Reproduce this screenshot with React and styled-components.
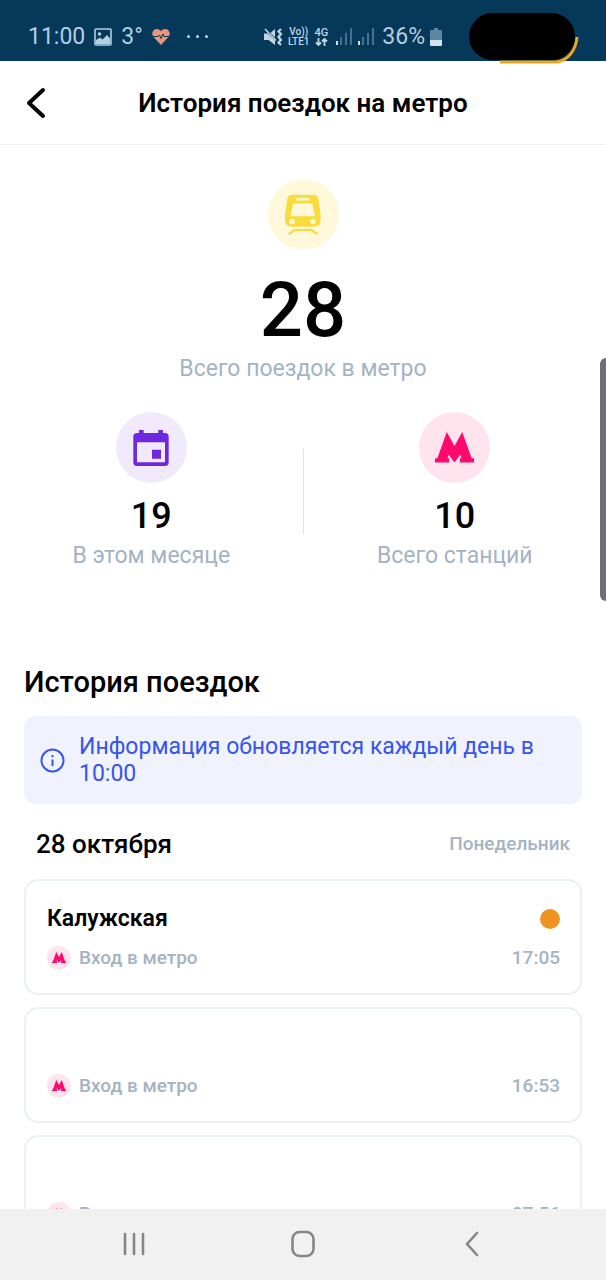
import React from 'react';
import styled, { createGlobalStyle } from 'styled-components';

const trips = [
  { id: 1, station: 'Калужская', action: 'Вход в метро', time: '17:05', line: '#ef9422' },
  { id: 2, station: '', action: 'Вход в метро', time: '16:53' },
  { id: 3, station: '', action: 'Вход в метро', time: '07:56' }
];

const MetroLogo = ({ width }) => (
  <svg width={width} viewBox="0 0 116 91" fill="#ff0a6c" aria-hidden="true">
    <path d="M35 0L58 42L81 0L109 78H116V91H74V78H79L75 68L58 91L41 68L37 78H42V91H0V78H7Z" />
  </svg>
);

const TrainIcon = () => (
  <svg width="36" height="41" viewBox="0 0 108 122" aria-hidden="true">
    <path
      fill="#fadb3c"
      d="M24 2H83Q98 2 100 14L107 63V76Q107 98 85 98H22Q0 98 0 76V63L7 14Q9 2 24 2Z"
    />
    <g fill="#fff8db">
      <rect x="33" y="11" width="40" height="8" rx="4" />
      <path d="M28 28H78Q81 28 82 31L90 63Q90 66 87 66H20Q17 66 17 63L24 31Q25 28 28 28Z" />
      <circle cx="21" cy="82" r="8" />
      <circle cx="84" cy="82" r="8" />
    </g>
    <path d="M11 120L28 108H80L98 120" fill="none" stroke="#fadb3c" strokeWidth="7" strokeLinejoin="round" />
  </svg>
);

const CalendarIcon = () => (
  <svg width="36" height="36" viewBox="0 0 108 108" fill="#6f27e0" aria-hidden="true">
    <path fillRule="evenodd" d="M12 9H96Q107 9 107 20V97Q107 108 96 108H12Q1 108 1 97V20Q1 9 12 9ZM12 37V97H96V37Z" />
    <path d="M18 0H32V12H18ZM76 0H90V12H76ZM57 59H84V86H57Z" />
  </svg>
);

const PictureIcon = () => (
  <svg width="18" height="18" viewBox="0 0 18 18" aria-hidden="true">
    <rect x="1" y="1" width="16" height="16" rx="1" fill="none" stroke="#b3cde3" strokeWidth="1.6" />
    <circle cx="5.500" cy="6" r="1.800" fill="#b3cde3" />
    <path d="M2 12L6 9.500L8.500 11.500L13 7L16 10.500V16H2Z" fill="#b3cde3" />
  </svg>
);

const HeartIcon = () => (
  <svg width="18" height="16" viewBox="0 0 18 16" aria-hidden="true">
    <path d="M9 2.200C11 -0.600 15 -0.500 16.700 1.700C18.500 4 17.600 6.800 16 8.500L9 16L2 8.500C0.400 6.800 -0.500 4 1.300 1.700C3 -0.500 7 -0.600 9 2.200Z" fill="#e8967a" />
    <path d="M1 7.500H6L7.500 6L9 9.500L11 5L12 7.500H17" fill="none" stroke="#06385a" strokeWidth="1" />
  </svg>
);

const MuteIcon = () => (
  <svg width="19" height="18" viewBox="0 0 19 18" aria-hidden="true">
    <path d="M0 5.500H3.500L11 12.500V17L4.500 12H0ZM6.500 5L11 1V9.200Z" fill="#c3d5e4" />
    <path d="M1 1L12 12.500" stroke="#c3d5e4" strokeWidth="1.600" />
    <path d="M17 1L14.500 3.500L17 6L14.500 9L17 12L14.500 14.500L17 17" fill="none" stroke="#c3d5e4" strokeWidth="2.200" />
  </svg>
);

const DataArrows = () => (
  <svg width="13" height="8" viewBox="0 0 13 8" aria-hidden="true">
    <path d="M3.500 0V7M1 4.500L3.500 7L6 4.500M9.500 8V1M7 3.500L9.500 1L12 3.500" fill="none" stroke="#c3d5e4" strokeWidth="1.800" />
  </svg>
);

const SignalIcon = () => (
  <svg width="16" height="17" viewBox="0 0 16 17" aria-hidden="true">
    <rect x="0" y="13" width="2" height="4" fill="#d5e3ee" />
    <g fill="#47708f">
      <rect x="4" y="9" width="2" height="8" />
      <rect x="9" y="5" width="2" height="12" />
      <rect x="14" y="0" width="2" height="17" />
    </g>
  </svg>
);

const BatteryIcon = () => (
  <svg width="12" height="18" viewBox="0 0 12 18" aria-hidden="true">
    <path d="M4 0H8V2H11Q12 2 12 3V12H0V3Q0 2 1 2H4Z" fill="#5d86a3" />
    <path d="M0 12H12V17Q12 18 11 18H1Q0 18 0 17Z" fill="#d5e3ee" />
  </svg>
);

const InfoIcon = () => (
  <svg width="25" height="25" viewBox="0 0 25 25" fill="none" stroke="#3654ee" strokeWidth="2" aria-hidden="true">
    <circle cx="12.500" cy="12.500" r="11" />
    <path d="M12.500 11.500V18M12.500 7V9.300" />
  </svg>
);

const Stat = ({ icon, tint, value, caption, large }) => (
  <StatBlock>
    <Circle $tint={tint}>{icon}</Circle>
    <StatValue $large={large}>{value}</StatValue>
    <Caption>{caption}</Caption>
  </StatBlock>
);

const Trip = ({ station, action, time, line }) => (
  <Card>
    <CardRow>
      <Station>{station}</Station>
      {line && <LineDot $color={line} />}
    </CardRow>
    <CardRow>
      <Action>
        <SmallCircle><MetroLogo width={14} /></SmallCircle>
        {action}
      </Action>
      <Time>{time}</Time>
    </CardRow>
  </Card>
);

const App = () => (
  <Screen>
    <GlobalStyle />
    <StatusBar>
      <StatusLeft>
        <span>11:00</span>
        <PictureIcon />
        <span>3°</span>
        <HeartIcon />
        <Dots><i /><i /><i /></Dots>
      </StatusLeft>
      <StatusRight>
        <MuteIcon />
        <Tiny><span>Vo))</span><span>LTE1</span></Tiny>
        <Tiny $big><span>4G</span><DataArrows /></Tiny>
        <Signals><SignalIcon /><SignalIcon /></Signals>
        <Percent>36%</Percent>
        <BatteryIcon />
      </StatusRight>
      <Cutout>
        <Arc width="80" height="28" viewBox="0 0 80 28">
          <path d="M1 26H57C69 25 77 14 78 1" fill="none" stroke="#efa51c" strokeWidth="3" />
        </Arc>
      </Cutout>
    </StatusBar>
    <Header>
      <BackButton type="button" aria-label="Назад">
        <svg width="20" height="32" viewBox="0 0 20 32" fill="none" stroke="#000" strokeWidth="4" strokeLinecap="round" strokeLinejoin="round">
          <path d="M17 3L3 16L17 29" />
        </svg>
      </BackButton>
      <Title>История поездок на метро</Title>
    </Header>
    <Content>
      <Stat large icon={<TrainIcon />} tint="#fff8db" value="28" caption="Всего поездок в метро" />
      <StatsRow>
        <Stat icon={<CalendarIcon />} tint="#f1eafc" value="19" caption="В этом месяце" />
        <Divider />
        <Stat icon={<MetroLogo width={39} />} tint="#ffe4ee" value="10" caption="Всего станций" />
      </StatsRow>
      <History>
        <SectionTitle>История поездок</SectionTitle>
        <Notice>
          <InfoIcon />
          <p>Информация обновляется каждый день в 10:00</p>
        </Notice>
        <DayRow>
          <Day>28 октября</Day>
          <Weekday>Понедельник</Weekday>
        </DayRow>
        <Trips>
          {trips.map(trip => <Trip key={trip.id} {...trip} />)}
        </Trips>
      </History>
    </Content>
    <NavBar>
      <NavButton type="button" aria-label="Недавние">
        <svg width="22" height="24" viewBox="0 0 22 24" stroke="#868686" strokeWidth="2.600" strokeLinecap="round">
          <path d="M2 2V22M11 2V22M20 2V22" />
        </svg>
      </NavButton>
      <NavButton type="button" aria-label="Домой">
        <svg width="24" height="28" viewBox="0 0 24 28" fill="none" stroke="#868686" strokeWidth="2.600">
          <rect x="1.500" y="2" width="21" height="24" rx="7" />
        </svg>
      </NavButton>
      <NavButton type="button" aria-label="Назад">
        <svg width="14" height="26" viewBox="0 0 14 26" fill="none" stroke="#868686" strokeWidth="2.600" strokeLinecap="round">
          <path d="M12 2L2 13L12 24" />
        </svg>
      </NavButton>
    </NavBar>
    <EdgeHandle />
  </Screen>
);

export default App;


const GlobalStyle = createGlobalStyle`
  * {
    box-sizing: border-box;
  }
  body, p, h1, h2, h3, ul {
    margin: 0;
    padding: 0;
  }
  body {
    background: #fff;
    color: #000;
    font-family: Roboto, "Noto Sans", sans-serif;
  }
  svg {
    display: block;
    flex-shrink: 0;
  }
  button {
    border: 0;
    padding: 0;
    background: none;
  }
`

const Screen = styled.div`
  position: relative;
  display: flex;
  flex-direction: column;
  height: 100vh;
  overflow: hidden;
`

const StatusBar = styled.div`
  display: flex;
  align-items: center;
  height: 61px;
  flex-shrink: 0;
  padding: 12px 31px 0 28px;
  background: #06385a;
  color: #b3cde3;
  font-size: 23px;
  line-height: 28px;
`

const StatusLeft = styled.div`
  display: flex;
  align-items: center;
  gap: 9px;
`

const StatusRight = styled.div`
  display: flex;
  align-items: center;
  gap: 5px;
  margin-left: auto;
`

const Dots = styled.span`
  display: flex;
  gap: 6px;
  margin-left: 8px;

  i {
    width: 3px;
    height: 3px;
    border-radius: 50%;
    background: #c3d5e4;
  }
`

const Tiny = styled.span`
  display: flex;
  flex-direction: column;
  align-items: center;
  color: #c3d5e4;
  font-size: ${props => props.$big ? '11px' : '10px'};
  font-weight: 500;
  line-height: 10px;
`

const Signals = styled.span`
  display: flex;
  gap: 6px;
  margin: 0 3px;
`

const Percent = styled.span`
  color: #b8cddd;
`

const Cutout = styled.div`
  position: relative;
  width: 106px;
  height: 47px;
  margin-left: 27px;
  border-radius: 24px;
  background: #000;
`

const Arc = styled.svg`
  position: absolute;
  right: -4px;
  bottom: -4px;
`

const Header = styled.header`
  display: grid;
  grid-template-columns: 60px 1fr 60px;
  align-items: center;
  height: 84px;
  flex-shrink: 0;
  border-bottom: 1px solid #f0f1f2;
`

const BackButton = styled.button`
  padding-left: 26px;
`

const Title = styled.h1`
  font-size: 26px;
  line-height: 32px;
  font-weight: 600;
  text-align: center;
`

const Content = styled.main`
  flex: 1;
  min-height: 0;
  overflow: hidden;
  padding-top: 34px;
`

const StatBlock = styled.div`
  flex: 1;
  display: flex;
  flex-direction: column;
  align-items: center;
`

const Circle = styled.div`
  display: flex;
  align-items: center;
  justify-content: center;
  width: 71px;
  height: 71px;
  border-radius: 50%;
  background: ${props => props.$tint};
`

const StatValue = styled.div`
  font-size: ${props => props.$large ? '76px' : '36px'};
  line-height: ${props => props.$large ? '80px' : '40px'};
  margin: ${props => props.$large ? '20px 0 5px' : '13px 0 6px'};
  font-weight: 500;
`

const Caption = styled.div`
  color: #a5b3c4;
  font-size: 23px;
  line-height: 28px;
`

const StatsRow = styled.div`
  display: flex;
  align-items: center;
  margin-top: 29px;
`

const Divider = styled.div`
  width: 1px;
  height: 85px;
  background: #dde2e8;
`

const History = styled.section`
  padding: 95px 24px 0;
`

const SectionTitle = styled.h2`
  font-size: 29px;
  line-height: 34px;
  font-weight: 500;
`

const Notice = styled.div`
  display: flex;
  align-items: center;
  gap: 14px;
  margin-top: 17px;
  padding: 17px 16px;
  border-radius: 12px;
  background: #f0f3fe;
  color: #3654ee;
  font-size: 23px;
  line-height: 27px;
`

const DayRow = styled.div`
  display: flex;
  align-items: center;
  justify-content: space-between;
  padding: 25px 12px 20px;
`

const Day = styled.h3`
  font-size: 26px;
  line-height: 30px;
  font-weight: 500;
`

const Weekday = styled.span`
  color: #a5b3c4;
  font-size: 19px;
  line-height: 24px;
  font-weight: 500;
`

const Trips = styled.ul`
  display: flex;
  flex-direction: column;
  gap: 12px;
  list-style: none;
`

const Card = styled.li`
  display: flex;
  flex-direction: column;
  gap: 10px;
  padding: 23px 20px 21px 21px;
  border: 2px solid #ebf0f5;
  border-radius: 14px;
`

const CardRow = styled.div`
  display: flex;
  align-items: center;
  justify-content: space-between;
  height: 29px;
`

const Station = styled.h3`
  font-size: 23px;
  line-height: 28px;
  font-weight: 600;
`

const LineDot = styled.span`
  width: 20px;
  height: 20px;
  border-radius: 50%;
  background: ${props => props.$color};
`

const Action = styled.div`
  display: flex;
  align-items: center;
  gap: 8px;
  color: #a5b3c4;
  font-size: 19px;
  line-height: 24px;
  font-weight: 500;
`

const SmallCircle = styled.span`
  display: flex;
  align-items: center;
  justify-content: center;
  width: 24px;
  height: 24px;
  border-radius: 50%;
  background: #ffe4ee;
`

const Time = styled.span`
  color: #a5b3c4;
  font-size: 19px;
  line-height: 24px;
  font-weight: 500;
`

const NavBar = styled.nav`
  display: flex;
  height: 71px;
  flex-shrink: 0;
  padding: 0 49px 2px;
  background: #f1f1f1;
`

const NavButton = styled.button`
  flex: 1;
  display: flex;
  align-items: center;
  justify-content: center;
`

const EdgeHandle = styled.div`
  position: absolute;
  right: 0;
  top: 358px;
  width: 6px;
  height: 243px;
  border-radius: 6px 0 0 6px;
  background: #6f6e7c;
`
